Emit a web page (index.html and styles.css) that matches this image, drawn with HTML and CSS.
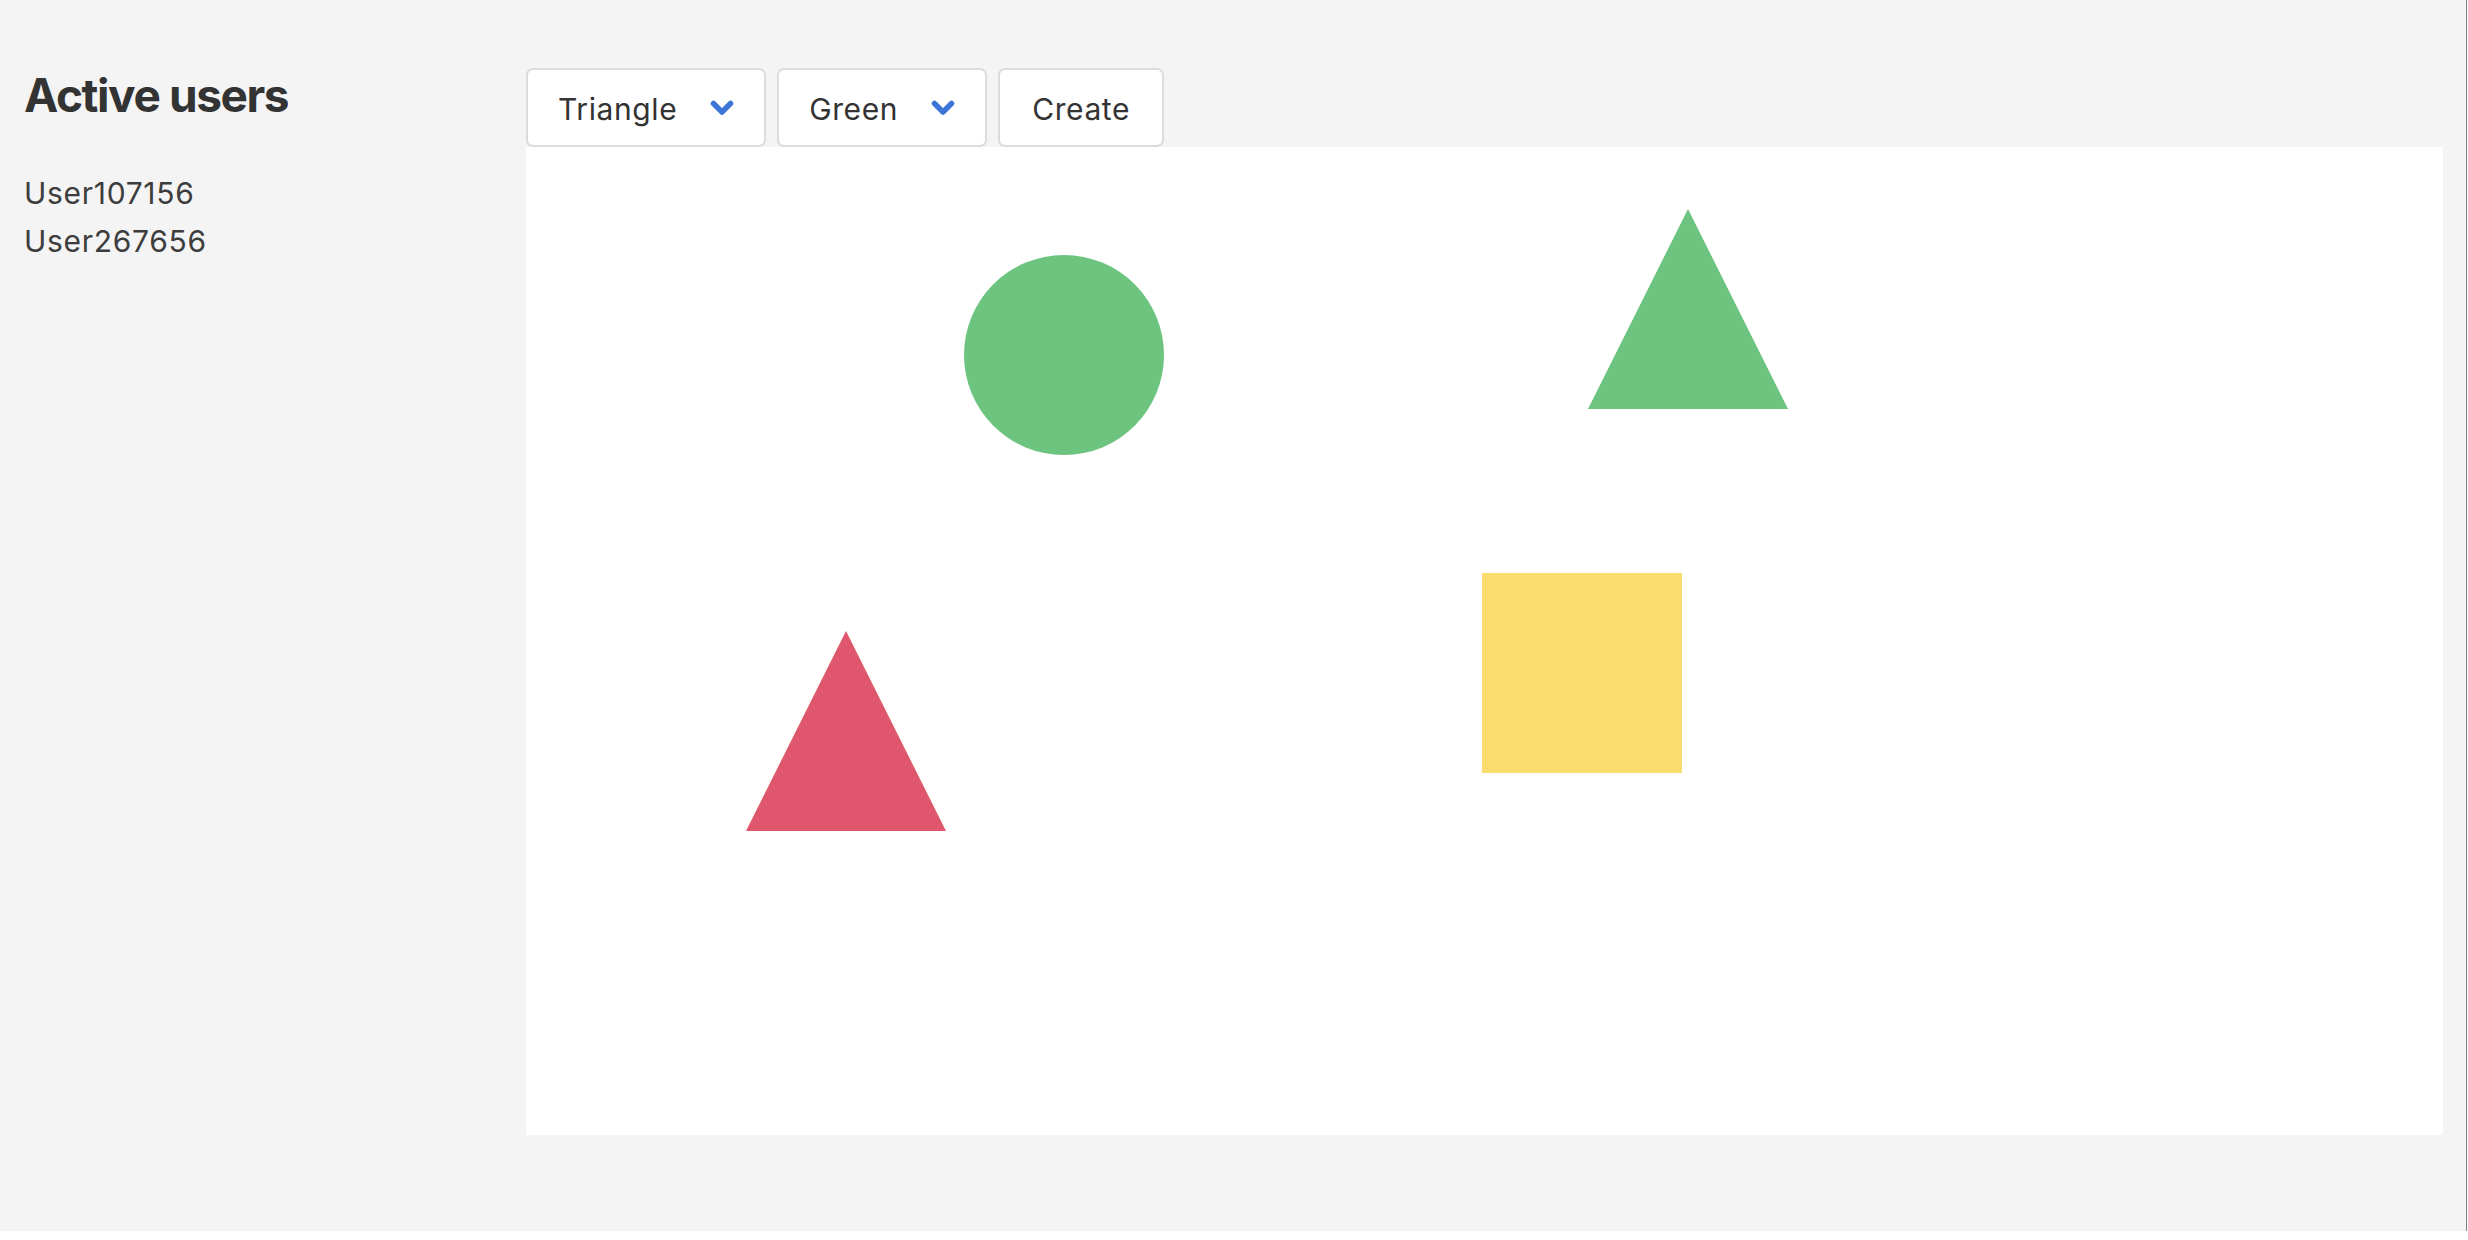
FILE: index.html
```html
<!DOCTYPE html>
<html>
<head>
<meta charset="utf-8">
<title>Shapes</title>
<link rel="stylesheet" href="styles.css">
</head>
<body>
<div class="app">
  <aside class="sidebar">
    <h1 class="title">Active users</h1>
    <ul class="users">
      <li>User107156</li>
      <li>User267656</li>
    </ul>
  </aside>
  <main class="main">
    <div class="toolbar">
      <div class="btn select">
        <span>Triangle</span>
        <svg class="chev" width="24" height="16" viewBox="0 0 24 16"><polyline points="3.5,3.5 12,12 20.5,3.5" fill="none" stroke="#3d74d8" stroke-width="5.5" stroke-linecap="round" stroke-linejoin="round"/></svg>
      </div>
      <div class="btn select">
        <span>Green</span>
        <svg class="chev" width="24" height="16" viewBox="0 0 24 16"><polyline points="3.5,3.5 12,12 20.5,3.5" fill="none" stroke="#3d74d8" stroke-width="5.5" stroke-linecap="round" stroke-linejoin="round"/></svg>
      </div>
      <div class="btn create">Create</div>
    </div>
    <div class="canvas">
      <div class="shape circle" style="left:438px;top:108px"></div>
      <svg class="shape" style="left:1062px;top:62px" width="200" height="200" viewBox="0 0 200 200"><polygon points="100,0 200,200 0,200" fill="#6cc47e"/></svg>
      <div class="shape square" style="left:956px;top:426px"></div>
      <svg class="shape" style="left:220px;top:484px" width="200" height="200" viewBox="0 0 200 200"><polygon points="100,0 200,200 0,200" fill="#e0566c"/></svg>
    </div>
  </main>
</div>
</body>
</html>
```
FILE: styles.css
```css
html, body {
  margin: 0;
  padding: 0;
  background: #ffffff;
}
body {
  font-family: Inter, "Liberation Sans", sans-serif;
  color: #333333;
}
.app {
  display: flex;
  width: 2467px;
  height: 1231px;
  background: #f4f4f4;
  border-right: 1px solid #7d7d7d;
  box-sizing: border-box;
}
.sidebar {
  width: 526px;
  flex: none;
  box-sizing: border-box;
  padding: 66px 0 0 24px;
}
.title {
  margin: 0;
  font-size: 46px;
  line-height: 58px;
  font-weight: 700;
  letter-spacing: -1.4px;
  color: #333333;
}
.users {
  list-style: none;
  margin: 45px 0 0 0;
  padding: 0;
  font-size: 30px;
  line-height: 48px;
  letter-spacing: 0.7px;
  color: #3d3d3d;
}
.main {
  flex: none;
  width: 1917px;
  padding-top: 68px;
  display: flex;
  flex-direction: column;
}
.toolbar {
  display: flex;
  gap: 11px;
  height: 79px;
}
.btn {
  box-sizing: border-box;
  height: 79px;
  background: #ffffff;
  border: 2px solid #dcdcdc;
  border-radius: 7px;
  display: flex;
  align-items: center;
  font-size: 30px;
  line-height: 36px;
  letter-spacing: 0.6px;
  color: #333333;
  padding-top: 2px;
}
.select {
  padding-left: 30px;
  padding-right: 30px;
  gap: 33px;
}
.chev {
  display: block;
  margin-top: -2px;
}
.create {
  padding-left: 32px;
  padding-right: 32px;
}
.canvas {
  position: relative;
  width: 1917px;
  height: 988px;
  background: #ffffff;
}
.shape {
  position: absolute;
  display: block;
}
.circle {
  width: 200px;
  height: 200px;
  border-radius: 50%;
  background: #6cc47e;
}
.square {
  width: 200px;
  height: 200px;
  background: #fadc6f;
}
```
